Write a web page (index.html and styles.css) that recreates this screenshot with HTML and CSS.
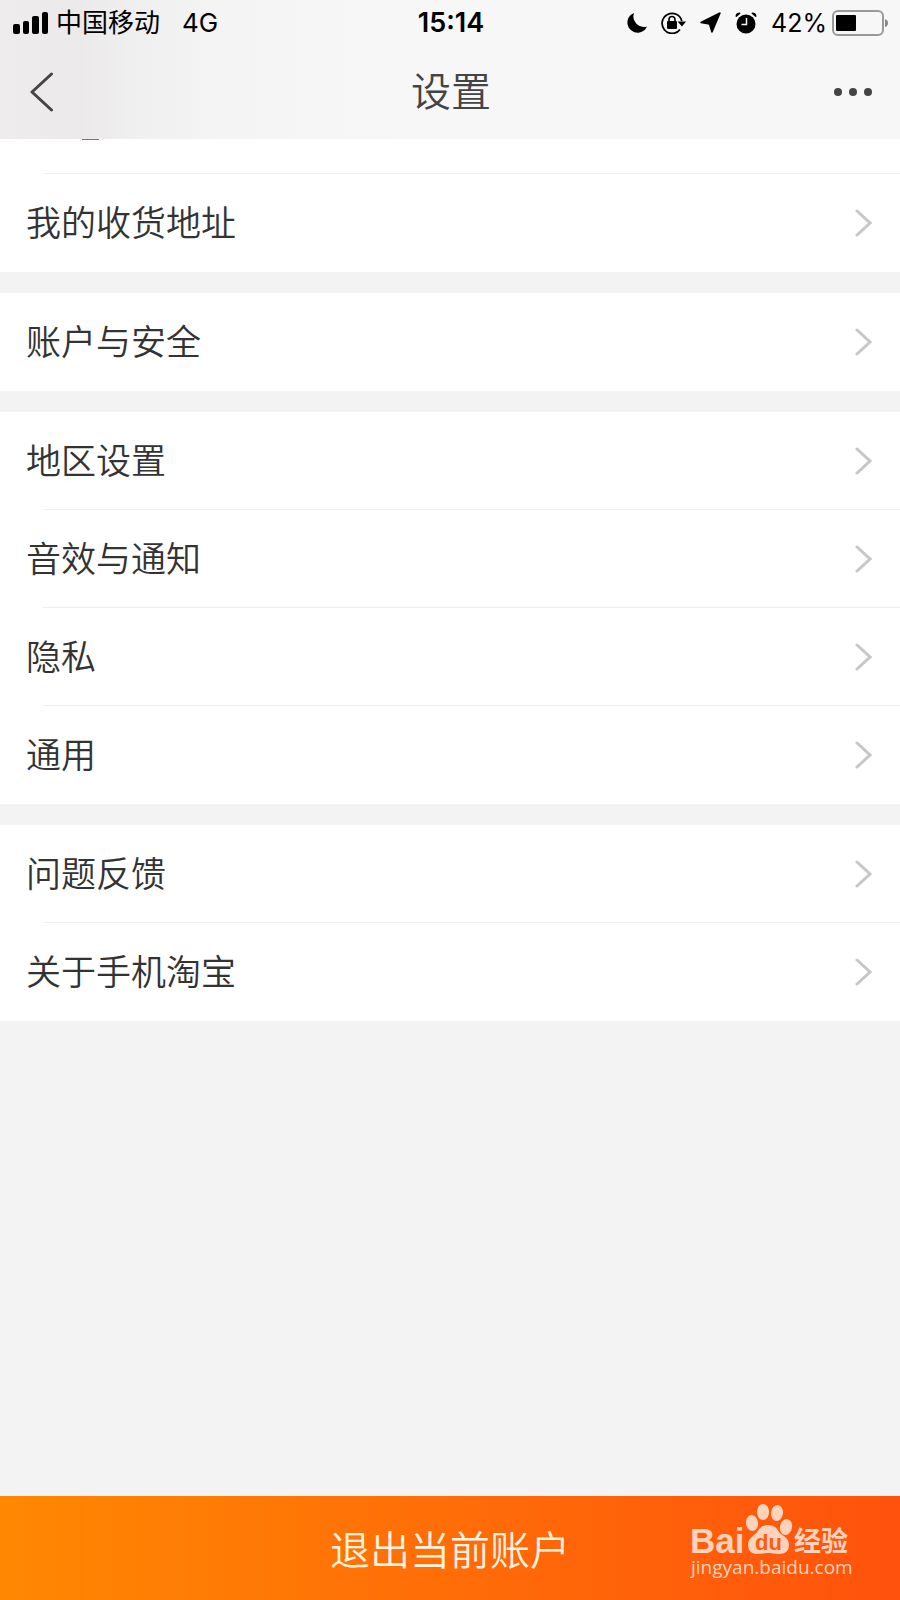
FILE: index.html
```html
<!DOCTYPE html>
<html lang="zh-CN">
<head>
  <meta charset="UTF-8" />
  <meta name="viewport" content="width=device-width, initial-scale=1.0"/>
  <title>设置</title>
  <link rel="stylesheet" href="styles.css">
</head>
<body>

<header class="header">
  <div class="status">
    <div class="status-left">
      <svg class="signal" width="36" height="22" viewBox="0 0 36 22" aria-hidden="true">
        <rect x="0" y="12" width="7" height="10" rx="2"/>
        <rect x="10" y="9" width="6" height="13" rx="2"/>
        <rect x="19" y="4" width="7" height="18" rx="2"/>
        <rect x="29" y="0" width="6" height="22" rx="2"/>
      </svg>
      <span>中国移动</span>
      <span class="network">4G</span>
    </div>
    <div class="time">15:14</div>
    <div class="status-right">
      <!-- do not disturb -->
      <svg width="20" height="20" viewBox="0 0 20 20" aria-hidden="true">
        <path d="M7 0A10.2 10.2 0 1 0 20 13.500A10.500 10.500 0 0 1 7 0Z"/>
      </svg>
      <!-- rotation lock -->
      <svg width="25" height="22" viewBox="0 0 25 22" aria-hidden="true">
        <path d="M19 17.500A10 10 0 1 1 20.800 9" fill="none" stroke="#000" stroke-width="1.800"/>
        <path d="M16.500 9.500H25L21 14.500Z"/>
        <rect x="6" y="9" width="10" height="8" rx="1"/>
        <path d="M8 10V7.500a3 3 0 0 1 6 0V10" fill="none" stroke="#000" stroke-width="1.600"/>
      </svg>
      <!-- location -->
      <svg width="21" height="21" viewBox="0 0 21 21" aria-hidden="true">
        <path d="M20 1L12 20L9.500 12L1 10.500Z" stroke="#000" stroke-width="1.500" stroke-linejoin="round"/>
      </svg>
      <!-- alarm -->
      <svg width="22" height="22" viewBox="0 0 22 22" aria-hidden="true">
        <circle cx="11" cy="12" r="9.500"/>
        <path d="M0.500 4.500C0.500 2 2 0.500 5 0.500L5.500 1.500L1.500 5ZM21.500 4.500C21.500 2 20 0.500 17 0.500L16.500 1.500L20.500 5Z"/>
        <path d="M11.500 6V12.500H6.500" fill="none" stroke="#f7f7f8" stroke-width="1.500"/>
      </svg>
      <span class="percent">42%</span>
      <svg class="battery" width="57" height="26" viewBox="0 0 57 26" aria-hidden="true">
        <rect x="1" y="1" width="50" height="24" rx="5" fill="none" stroke="#999" stroke-width="2"/>
        <rect x="4" y="5" width="20" height="16" rx="1"/>
        <path d="M53 9Q56 10 56 13T53 17Z" fill="#888"/>
      </svg>
    </div>
  </div>

  <nav class="navbar">
    <button class="icon-btn" type="button" aria-label="返回">
      <svg width="24" height="40" viewBox="0 0 24 40" aria-hidden="true">
        <path d="M21.500 2L2 20L21.500 38" fill="none" stroke="#444" stroke-width="3" stroke-linecap="round" stroke-linejoin="round"/>
      </svg>
    </button>
    <h1>设置</h1>
    <button class="icon-btn more" type="button" aria-label="更多">
      <svg width="38" height="8" viewBox="0 0 38 8" fill="#444" aria-hidden="true">
        <circle cx="4" cy="4" r="4"/>
        <circle cx="19" cy="4" r="4"/>
        <circle cx="34" cy="4" r="4"/>
      </svg>
    </button>
  </nav>
</header>

<main>
  <section class="group">
    <!-- bottom edge of the profile row, scrolled under the header -->
    <div class="profile-end"><span class="profile-mark"></span></div>
    <a class="row" href="#">我的收货地址<svg class="arrow" viewBox="0 0 17 28"><path d="M2 2L15 14L2 26"/></svg></a>
  </section>

  <section class="group">
    <a class="row" href="#">账户与安全<svg class="arrow" viewBox="0 0 17 28"><path d="M2 2L15 14L2 26"/></svg></a>
  </section>

  <section class="group">
    <a class="row" href="#">地区设置<svg class="arrow" viewBox="0 0 17 28"><path d="M2 2L15 14L2 26"/></svg></a>
    <a class="row" href="#">音效与通知<svg class="arrow" viewBox="0 0 17 28"><path d="M2 2L15 14L2 26"/></svg></a>
    <a class="row" href="#">隐私<svg class="arrow" viewBox="0 0 17 28"><path d="M2 2L15 14L2 26"/></svg></a>
    <a class="row" href="#">通用<svg class="arrow" viewBox="0 0 17 28"><path d="M2 2L15 14L2 26"/></svg></a>
  </section>

  <section class="group">
    <a class="row" href="#">问题反馈<svg class="arrow" viewBox="0 0 17 28"><path d="M2 2L15 14L2 26"/></svg></a>
    <a class="row" href="#">关于手机淘宝<svg class="arrow" viewBox="0 0 17 28"><path d="M2 2L15 14L2 26"/></svg></a>
  </section>
</main>

<footer class="footer">
  <button class="logout" type="button">退出当前账户</button>
  <svg class="watermark" width="164" height="84" viewBox="0 0 164 84">
    <text class="wm-bai" x="0" y="53">Bai</text>
    <ellipse cx="62" cy="23" rx="6" ry="8" transform="rotate(-8 62 23)"/>
    <ellipse cx="73" cy="12" rx="6" ry="8"/>
    <ellipse cx="87" cy="13" rx="6" ry="8" transform="rotate(8 87 13)"/>
    <ellipse cx="96" cy="27" rx="6" ry="8" transform="rotate(12 96 27)"/>
    <path d="M78 25C84 25 87 28 89 32C92 36 99 37 99 45C99 51 95 54 89 54C84 54 82 53 78 53C74 53 72 54 67 54C62 54 58 51 58 45C58 38 64 36 67 32C70 28 72 25 78 25Z"/>
    <text class="wm-du" x="65" y="50">du</text>
    <text class="wm-cn" x="104" y="51">经验</text>
    <text class="wm-url" x="1" y="74">jingyan.baidu.com</text>
  </svg>
</footer>

</body>
</html>
```
FILE: styles.css
```css
* {
  box-sizing: border-box;
}

body {
  margin: 0;
  min-height: 100vh;
  display: flex;
  flex-direction: column;
  background: #f3f3f3;
  color: #333;
  font-family: Inter, "Noto Sans CJK SC", sans-serif;
}

.header {
  background: linear-gradient(90deg, #eeecec 0, #ebe9e9 80px, #f0efef 130px, #f4f4f5 220px, #f7f7f8 400px);
}

.status {
  display: grid;
  grid-template-columns: 1fr auto 1fr;
  align-items: center;
  height: 45px;
  padding: 0 11px 0 13px;
  color: #000;
  font-size: 26px;
  line-height: 32px;
}

.status-left, .status-right {
  display: flex;
  align-items: center;
}

.signal {
  margin-right: 7px;
}

.network {
  margin-left: 22px;
}

.time {
  font-size: 27px;
  font-weight: 600;
}

.status-right {
  justify-content: flex-end;
  gap: 14px;
}

.percent {
  font-size: 25px;
}

.battery {
  margin-left: -9px;
}

.navbar {
  display: grid;
  grid-template-columns: 1fr auto 1fr;
  align-items: center;
  height: 94px;
  padding: 0 28px 0 30px;
}

h1 {
  margin: 0;
  color: #444;
  font-size: 40px;
  font-weight: 350;
  line-height: 48px;
}

.icon-btn {
  display: flex;
  justify-self: start;
  padding: 0;
  border: none;
  background: none;
  cursor: pointer;
}

.more {
  justify-self: end;
}

.group {
  background: #fff;
  margin-bottom: 21px;
}

.profile-end {
  height: 35px;
  padding-left: 82px;
  background: linear-gradient(#eee, #eee) 43px 100% / 100% 1px no-repeat;
}

.profile-mark {
  display: block;
  width: 17px;
  height: 1px;
  background: #777;
}

.row {
  display: flex;
  align-items: center;
  justify-content: space-between;
  height: 98px;
  padding: 0 28px 0 26px;
  background: linear-gradient(#eee, #eee) 43px 100% / 100% 1px no-repeat;
  color: #333;
  font-size: 35px;
  font-weight: 350;
  line-height: 48px;
  text-decoration: none;
}

.row:last-child {
  background: none;
}

.arrow {
  width: 17px;
  height: 28px;
  fill: none;
  stroke: #c7c7c7;
  stroke-width: 3;
  stroke-linecap: round;
}

.footer {
  position: relative;
  margin-top: auto;
}

.logout {
  display: block;
  width: 100%;
  height: 104px;
  padding: 0;
  border: none;
  background: linear-gradient(90deg, #ff8802, #ff520d);
  color: #fff3df;
  font-family: inherit;
  font-size: 40px;
  font-weight: 350;
  cursor: pointer;
}

.watermark {
  position: absolute;
  right: 46px;
  top: 4px;
  fill: #ffd2bb;
  pointer-events: none;
}

.wm-bai {
  font: bold 35px "Liberation Sans", sans-serif;
}

.wm-du {
  font: bold 22px "Liberation Sans", sans-serif;
  fill: #ff5d0b;
}

.wm-cn {
  font: bold 27px "Noto Sans CJK SC", sans-serif;
}

.wm-url {
  font: 19px "Open Sans", sans-serif;
}
```
